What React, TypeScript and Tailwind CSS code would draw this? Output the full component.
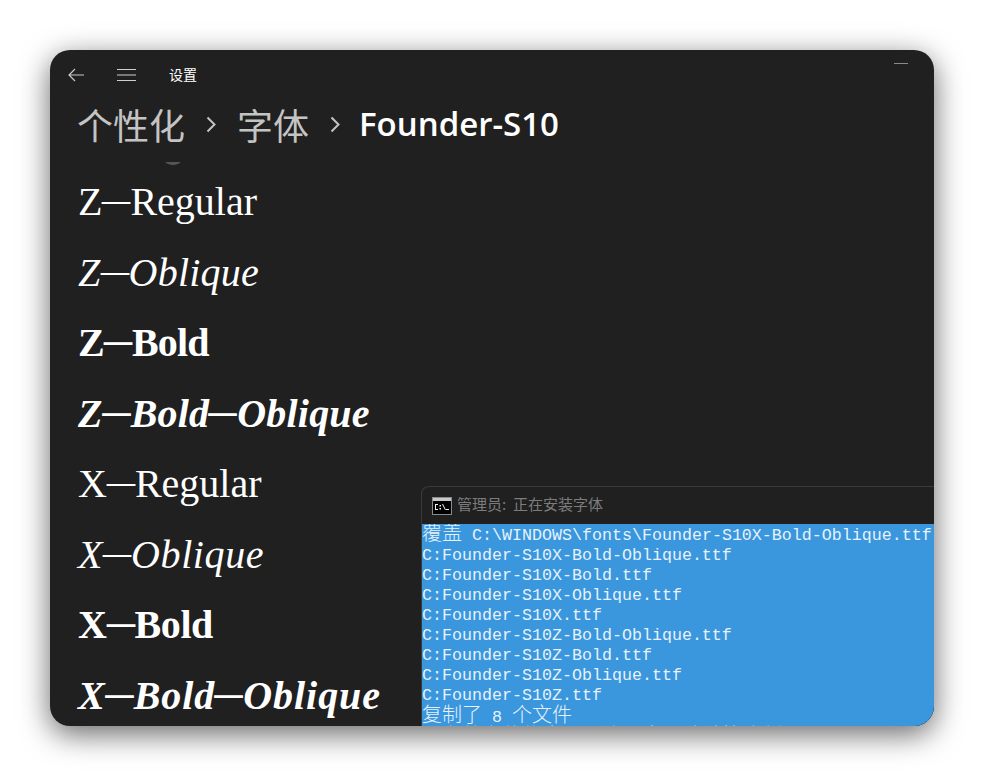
const rows = [
  { parts: ['Z', 'Regular'], cls: '' },
  { parts: ['Z', 'Oblique'], cls: 'italic tracking-[0.25px]' },
  { parts: ['Z', 'Bold'], cls: 'font-bold tracking-[-0.8px]' },
  { parts: ['Z', 'Bold', 'Oblique'], cls: 'font-bold italic tracking-[0.2px]' },
  { parts: ['X', 'Regular'], cls: '' },
  { parts: ['X', 'Oblique'], cls: 'italic tracking-[0.6px]' },
  { parts: ['X', 'Bold'], cls: 'font-bold tracking-[-0.4px]' },
  { parts: ['X', 'Bold', 'Oblique'], cls: 'font-bold italic tracking-[0.95px]' },
];

const copied = [
  'C:Founder-S10X-Bold-Oblique.ttf',
  'C:Founder-S10X-Bold.ttf',
  'C:Founder-S10X-Oblique.ttf',
  'C:Founder-S10X.ttf',
  'C:Founder-S10Z-Bold-Oblique.ttf',
  'C:Founder-S10Z-Bold.ttf',
  'C:Founder-S10Z-Oblique.ttf',
  'C:Founder-S10Z.ttf',
];

const cjk = "font-['Noto_Sans_CJK_SC',sans-serif]";
const cjkBig = `text-[20px] font-light ${cjk}`;

function Chevron() {
  return (
    <svg width="10" height="17" viewBox="0 0 10 17" fill="none" stroke="#c4c4c4" strokeWidth="2" className="mx-[21px] shrink-0">
      <path d="M1.5 1.5l7 7-7 7" />
    </svg>
  );
}

function ConsoleIcon() {
  return (
    <svg width="20" height="18" viewBox="0 0 20 18" className="shrink-0">
      <rect x="0.5" y="0.5" width="19" height="17" fill="#000" stroke="#8a8a8a" />
      <rect x="1" y="1" width="18" height="3" fill="#c8c8c8" />
      <path d="M3 7h3v1H4v4h2v1H3zM7.5 11h1.500v1.500h-1.500zM7.5 8h1.500v1.500h-1.500zM10 7h1l3 6h-1zM14 12h3v1h-3z" fill="#f0f0f0" />
    </svg>
  );
}

export default function App() {
  return (
    <div className="w-[984px] h-[776px] bg-white p-[50px] overflow-hidden">
      <div className="relative w-[884px] h-[676px] rounded-[20px] bg-[#202020] overflow-hidden shadow-[0_8px_30px_rgba(0,0,0,0.6)]">
        {/* Title bar */}
        <div className="flex items-center h-[50px] pl-[18px] text-white">
          <svg width="16" height="14" viewBox="0 0 16 14" fill="none" stroke="#c8c8c8" strokeWidth="1.2">
            <path d="M1 7h15M7 1L1 7l6 6" />
          </svg>
          <svg width="20" height="14" viewBox="0 0 20 14" fill="none" stroke="#d0d0d0" strokeWidth="1.2" className="ml-[33px]">
            <path d="M0 1.500h19M0 7h19M0 12.500h19" />
          </svg>
          <span className={`ml-[32px] -mt-[2px] text-[14px] ${cjk}`}>设置</span>
          <div className="ml-auto mr-[26px] -mt-6 w-[14px] h-px bg-[#8a8a8a]" />
        </div>

        {/* Breadcrumb */}
        <div className={`flex items-center h-[62px] pb-[14px] pl-[27px] text-[#c4c4c4] ${cjk}`}>
          <span className="text-[36px]">个性化</span>
          <Chevron />
          <span className="text-[36px]">字体</span>
          <Chevron />
          <span className="-ml-[2px] text-white font-semibold text-[33px] font-['Open_Sans',sans-serif]">Founder-S10</span>
        </div>

        {/* Font samples */}
        <div className="relative h-[564px] overflow-hidden">
          <div className="absolute left-[112px] top-[-17px] w-[22px] h-[20px] rounded-full bg-[#555555]" />
          <div className="pt-[5px] pl-[28px] font-['Liberation_Serif',serif] text-[40px] text-white">
            {rows.map(r => (
              <div key={r.parts.join('-')} className={`h-[70.5px] leading-[70.5px] ${r.cls}`}>
                {r.parts.map((p, i) => (
                  <span key={p}>
                    {i > 0 && <span className="inline-block w-[28px] origin-left scale-x-[1.4] -translate-y-[3px]">–</span>}
                    {p}
                  </span>
                ))}
              </div>
            ))}
          </div>
        </div>

        {/* Console overlay */}
        <div className="absolute left-[371px] top-[436px] w-[520px] h-[240px] rounded-tl-lg border-t border-l border-[#3a3a3a] bg-[#202020] overflow-hidden">
          <div className="flex items-center gap-[5px] h-[37px] pl-[10px]">
            <ConsoleIcon />
            <span className={`-mt-[2px] text-[15px] text-[#7c7c7c] ${cjk}`}>管理员:&nbsp;&nbsp;正在安装字体</span>
          </div>
          <div className="h-[202px] bg-[#3a96dd] text-[#e6f2fc] font-['Liberation_Mono',monospace] text-[16.67px] leading-[20px] whitespace-pre overflow-hidden">
            <div className="h-[24px] -mt-[2px]"><span className={cjkBig}>覆盖</span> C:\WINDOWS\fonts\Founder-S10X-Bold-Oblique.ttf</div>
            {copied.map(f => <div key={f} className="h-5">{f}</div>)}
            <div className="h-[18px] -mt-[2px]"><span className={cjkBig}>复制了</span> 8 <span className={cjkBig}>个文件</span></div>
            <div className={`h-5 pt-[3px] ${cjkBig}`}>正在将字体信息写入注册表，请稍等片刻</div>
          </div>
        </div>
      </div>
    </div>
  );
}
